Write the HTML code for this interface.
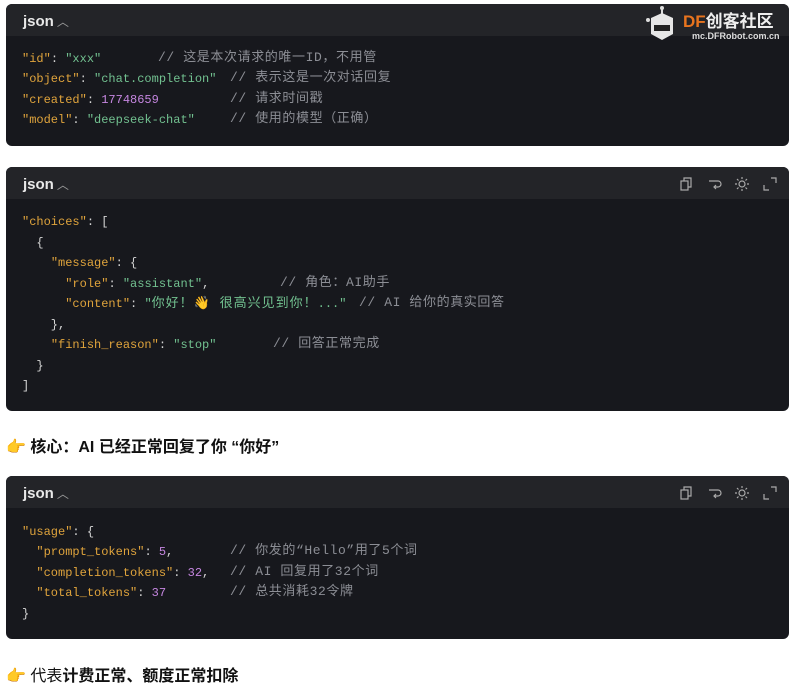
<!DOCTYPE html>
<html><head><meta charset="utf-8"><style>
body{margin:0;background:#fff;width:798px;height:695px;position:relative;overflow:hidden;font-family:"Liberation Sans","Noto Sans CJK SC",sans-serif}
.blk{position:absolute;left:6px;width:783px;background:#17181d;border-radius:6px;overflow:hidden}
.hd{height:32px;background:#232428;position:relative}
.hd .t{position:absolute;left:17px;top:9px;color:#e8e8e8;font-weight:bold;font-size:15px}
.hd .t span{font-weight:normal;color:#999;font-size:12px;margin-left:3px}
.ln{position:absolute;white-space:pre;font-family:"Liberation Mono","Noto Sans CJK SC",monospace;font-size:12px;color:#d4d4d4;line-height:16px}
.k{color:#e0a43c}.s{color:#72c190}.n{color:#c586e0}.c{color:#8c8e95;font-size:13px;letter-spacing:.6px}
.cj{font-size:13px;letter-spacing:1px}
.ic{position:absolute;top:10px}
.note{position:absolute;left:6px;font-size:16px;color:#111}
</style></head><body>

<div class="blk" style="top:4px;height:142px">
<div class="hd"><div class="t">json<span>︿</span></div>
<svg style="position:absolute;left:640px;top:2px" width="40" height="40" viewBox="0 0 40 40"><circle cx="16" cy="2" r="2" fill="#ddd"/><line x1="16" y1="2" x2="16" y2="8" stroke="#ddd" stroke-width="2"/><polygon points="5,12 16,7 27,12 27,28 16,34 5,28" fill="#e6e6e6"/><rect x="8" y="19" width="16" height="6" fill="#222"/><circle cx="2" cy="14" r="2" fill="#ddd"/></svg>
<div style="position:absolute;left:677px;top:3px;font-size:17px;font-weight:bold;color:#eee"><span style="color:#e8741e">DF</span>创客社区</div>
<div style="position:absolute;left:686px;top:27px;font-size:9px;font-weight:bold;color:#ddd">mc.DFRobot.com.cn</div>
</div>
</div>
<div class="ln" style="left:22px;top:51px"><span class="k">"id"</span>: <span class="s">"xxx"</span></div>
<div class="ln c" style="left:158px;top:50px">// 这是本次请求的唯一ID，不用管</div>
<div class="ln" style="left:22px;top:71px"><span class="k">"object"</span>: <span class="s">"chat.completion"</span></div>
<div class="ln c" style="left:230px;top:70px">// 表示这是一次对话回复</div>
<div class="ln" style="left:22px;top:92px"><span class="k">"created"</span>: <span class="n">17748659</span></div>
<div class="ln c" style="left:230px;top:91px">// 请求时间戳</div>
<div class="ln" style="left:22px;top:112px"><span class="k">"model"</span>: <span class="s">"deepseek-chat"</span></div>
<div class="ln c" style="left:230px;top:111px">// 使用的模型（正确）</div>

<div class="blk" style="top:167px;height:244px"><div class="hd"><div class="t">json<span>︿</span></div>
<svg class="ic" style="left:673px" width="14" height="14" viewBox="0 0 14 14" fill="none" stroke="#aaa" stroke-width="1.2"><rect x="2" y="4" width="7" height="9"/><path d="M5 4V1h7v9H9"/></svg>
<svg class="ic" style="left:702px" width="14" height="14" viewBox="0 0 14 14" fill="none" stroke="#aaa" stroke-width="1.2"><path d="M1 4h9a3 3 0 0 1 0 6H6M8 8l-2 2 2 2"/></svg>
<svg class="ic" style="left:729px" width="14" height="14" viewBox="0 0 14 14" fill="none" stroke="#aaa" stroke-width="1.2"><circle cx="7" cy="7" r="3"/><path d="M7 0v2M7 12v2M0 7h2M12 7h2M2 2l1.5 1.5M10.5 10.5L12 12M2 12l1.5-1.5M10.5 3.5L12 2"/></svg>
<svg class="ic" style="left:757px" width="14" height="14" viewBox="0 0 14 14" fill="none" stroke="#aaa" stroke-width="1.2"><path d="M8 1h5v5M6 13H1V8"/></svg>
</div></div>
<div class="ln" style="left:22px;top:214px"><span class="k">"choices"</span>: [</div>
<div class="ln" style="left:22px;top:235px">  {</div>
<div class="ln" style="left:22px;top:255px">    <span class="k">"message"</span>: {</div>
<div class="ln" style="left:22px;top:276px">      <span class="k">"role"</span>: <span class="s">"assistant"</span>,</div>
<div class="ln c" style="left:280px;top:275px">// 角色：AI助手</div>
<div class="ln" style="left:22px;top:296px">      <span class="k">"content"</span>: <span class="s">"<span class="cj">你好！👋 很高兴见到你！</span>..."</span></div>
<div class="ln c" style="left:359px;top:295px">// AI 给你的真实回答</div>
<div class="ln" style="left:22px;top:317px">    },</div>
<div class="ln" style="left:22px;top:337px">    <span class="k">"finish_reason"</span>: <span class="s">"stop"</span></div>
<div class="ln c" style="left:273px;top:336px">// 回答正常完成</div>
<div class="ln" style="left:22px;top:358px">  }</div>
<div class="ln" style="left:22px;top:378px">]</div>

<div class="note" style="top:433px;font-weight:bold">👉 核心：AI 已经正常回复了你 “你好”</div>

<div class="blk" style="top:476px;height:163px"><div class="hd"><div class="t">json<span>︿</span></div>
<svg class="ic" style="left:673px" width="14" height="14" viewBox="0 0 14 14" fill="none" stroke="#aaa" stroke-width="1.2"><rect x="2" y="4" width="7" height="9"/><path d="M5 4V1h7v9H9"/></svg>
<svg class="ic" style="left:702px" width="14" height="14" viewBox="0 0 14 14" fill="none" stroke="#aaa" stroke-width="1.2"><path d="M1 4h9a3 3 0 0 1 0 6H6M8 8l-2 2 2 2"/></svg>
<svg class="ic" style="left:729px" width="14" height="14" viewBox="0 0 14 14" fill="none" stroke="#aaa" stroke-width="1.2"><circle cx="7" cy="7" r="3"/><path d="M7 0v2M7 12v2M0 7h2M12 7h2M2 2l1.5 1.5M10.5 10.5L12 12M2 12l1.5-1.5M10.5 3.5L12 2"/></svg>
<svg class="ic" style="left:757px" width="14" height="14" viewBox="0 0 14 14" fill="none" stroke="#aaa" stroke-width="1.2"><path d="M8 1h5v5M6 13H1V8"/></svg>
</div></div>
<div class="ln" style="left:22px;top:524px"><span class="k">"usage"</span>: {</div>
<div class="ln" style="left:22px;top:544px">  <span class="k">"prompt_tokens"</span>: <span class="n">5</span>,</div>
<div class="ln c" style="left:230px;top:543px">// 你发的“Hello”用了5个词</div>
<div class="ln" style="left:22px;top:565px">  <span class="k">"completion_tokens"</span>: <span class="n">32</span>,</div>
<div class="ln c" style="left:230px;top:564px">// AI 回复用了32个词</div>
<div class="ln" style="left:22px;top:585px">  <span class="k">"total_tokens"</span>: <span class="n">37</span></div>
<div class="ln c" style="left:230px;top:584px">// 总共消耗32令牌</div>
<div class="ln" style="left:22px;top:606px">}</div>

<div class="note" style="top:662px">👉 代表<b>计费正常、额度正常扣除</b></div>
</body></html>
